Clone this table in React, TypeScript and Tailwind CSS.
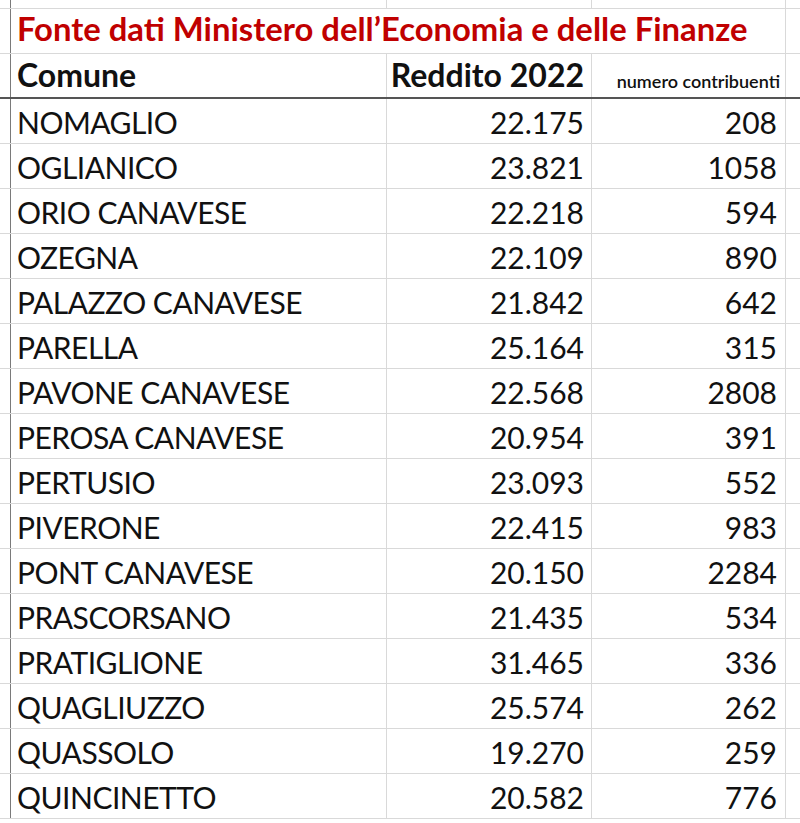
const ROWS: [string, string, string][] = [
  ["NOMAGLIO", "22.175", "208"],
  ["OGLIANICO", "23.821", "1058"],
  ["ORIO CANAVESE", "22.218", "594"],
  ["OZEGNA", "22.109", "890"],
  ["PALAZZO CANAVESE", "21.842", "642"],
  ["PARELLA", "25.164", "315"],
  ["PAVONE CANAVESE", "22.568", "2808"],
  ["PEROSA CANAVESE", "20.954", "391"],
  ["PERTUSIO", "23.093", "552"],
  ["PIVERONE", "22.415", "983"],
  ["PONT CANAVESE", "20.150", "2284"],
  ["PRASCORSANO", "21.435", "534"],
  ["PRATIGLIONE", "31.465", "336"],
  ["QUAGLIUZZO", "25.574", "262"],
  ["QUASSOLO", "19.270", "259"],
  ["QUINCINETTO", "20.582", "776"],
];

export default function App() {
  return (
    <div className="h-[823px] w-[800px] overflow-hidden bg-white font-['Lato',sans-serif] text-[#111]">
      {/* top sliver of the previous row */}
      <div className="flex h-[9px] border-b border-[#d9d9d9]">
        <div className="w-[11px] shrink-0 border-r border-[#7a7a7a]" />
        <div className="w-[376px] shrink-0 border-r border-[#d9d9d9]" />
        <div className="w-[205px] shrink-0 border-r border-[#d9d9d9]" />
        <div className="w-[194px] shrink-0 border-r border-[#d9d9d9]" />
        <div className="flex-1" />
      </div>

      {/* title */}
      <div className="flex h-[45px] border-b border-[#d9d9d9]">
        <div className="w-[11px] shrink-0 border-r border-[#7a7a7a]" />
        <div className="flex w-[775px] shrink-0 items-end whitespace-nowrap border-r border-[#d9d9d9] pb-[7px] pl-[6px] text-[32.8px] font-bold leading-none text-[#c00000]">
          Fonte dati Ministero dell’Economia e delle Finanze
        </div>
        <div className="flex-1" />
      </div>

      {/* header */}
      <div className="flex h-[45px] border-b-2 border-[#555]">
        <div className="w-[11px] shrink-0 border-r border-[#7a7a7a]" />
        <div className="flex w-[376px] shrink-0 items-end border-r border-[#d9d9d9] pb-[6px] pl-[6px] text-[32px] font-bold leading-none">
          Comune
        </div>
        <div className="flex w-[205px] shrink-0 items-end justify-end border-r border-[#d9d9d9] pb-[6px] pr-[7px] text-[32px] font-bold leading-none">
          Reddito 2022
        </div>
        <div className="flex w-[194px] shrink-0 items-end justify-end border-r border-[#d9d9d9] pb-[7px] pr-[5px] text-[18px] font-semibold leading-none">
          numero contribuenti
        </div>
        <div className="flex-1" />
      </div>

      {ROWS.map(([comune, reddito, numero]) => (
        <div key={comune} className="flex h-[45px] border-b border-[#d9d9d9]">
          <div className="w-[11px] shrink-0 border-r border-[#7a7a7a]" />
          <div className="flex w-[376px] shrink-0 items-end border-r border-[#d9d9d9] pb-[6px] pl-[6px] text-[30px] leading-none tracking-[-0.5px]">
            {comune}
          </div>
          <div className="flex w-[205px] shrink-0 items-end justify-end border-r border-[#d9d9d9] pb-[6px] pr-[7px] text-[30px] leading-none">
            {reddito}
          </div>
          <div className="flex w-[194px] shrink-0 items-end justify-end border-r border-[#d9d9d9] pb-[6px] pr-[8px] text-[30px] leading-none">
            {numero}
          </div>
          <div className="flex-1" />
        </div>
      ))}
    </div>
  );
}
